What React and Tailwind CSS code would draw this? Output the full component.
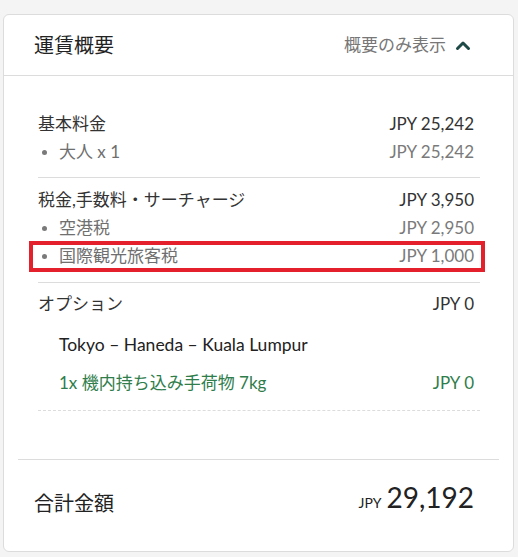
import React from "react";

const font = { fontFamily: 'Lato, "Noto Sans CJK JP", sans-serif' };

function Row({ label, value, sub, className = "" }) {
  return (
    <div className={`flex h-[28px] items-center justify-between pr-[6px] ${className}`}>
      {sub ? (
        <div className="flex items-center text-[#6f6f6f]">
          <span className="ml-[4px] mr-[12px] h-[5px] w-[5px] rounded-full bg-[#7a7a7a]" />
          <span>{label}</span>
        </div>
      ) : (
        <span className="text-[#333]">{label}</span>
      )}
      <span className={sub ? "text-[#7a7a7a]" : "text-[#333]"}>{value}</span>
    </div>
  );
}

export default function App() {
  return (
    <div className="min-h-[557px] w-[518px] bg-[#f4f4f4] pt-[14px] pl-[3px] pr-[4px]" style={font}>
      <div className="h-[538px] rounded-[6px] border border-[#dcdcdc] bg-white">
        <div className="flex h-[61px] items-center justify-between border-b border-[#dcdcdc] pl-[30px] pr-[42px]">
          <span className="text-[20px] text-[#222]">運賃概要</span>
          <div className="flex items-center gap-[9px] text-[17px] text-[#777]">
            <span>概要のみ表示</span>
            <svg width="16" height="11" viewBox="0 0 16 11">
              <path d="M2.5 8.5 L8 3 L13.5 8.5" fill="none" stroke="#1d4a46" strokeWidth="3" strokeLinecap="round" strokeLinejoin="round" />
            </svg>
          </div>
        </div>
        <div className="pl-[34px] pr-[33px] pt-[34px] text-[17px]">
          <Row label="基本料金" value="JPY 25,242" />
          <Row label="大人 x 1" value="JPY 25,242" sub />
          <div className="mt-[11px] border-t border-[#dcdcdc]" />
          <div className="pt-[8px]">
            <Row label="税金,手数料・サーチャージ" value="JPY 3,950" />
            <Row label="空港税" value="JPY 2,950" sub />
            <div className="relative">
              <Row label="国際観光旅客税" value="JPY 1,000" sub />
              <div className="pointer-events-none absolute -left-[9px] -right-[5px] -top-[1px] -bottom-[2px] border-[4px] border-[#e3202b]" />
            </div>
          </div>
          <div className="mt-[12px] border-t border-[#dcdcdc]" />
          <div className="pt-[7px]">
            <Row label="オプション" value="JPY 0" />
          </div>
          <div className="mt-[13px] flex h-[28px] items-center pl-[21px] text-[17.5px] text-[#222]">
            Tokyo – Haneda – Kuala Lumpur
          </div>
          <div className="mt-[10px] flex h-[28px] items-center justify-between pl-[21px] pr-[6px] text-[#2f7d4b]">
            <span>1x 機内持ち込み手荷物 7kg</span>
            <span>JPY 0</span>
          </div>
          <div className="mt-[13px] border-t border-dashed border-[#dcdcdc]" />
        </div>
        <div className="mx-[14px] mt-[48px] border-t border-[#dcdcdc]" />
        <div className="flex items-center justify-between pl-[30px] pr-[39px] pt-[16px]">
          <span className="mt-[12px] text-[20px] text-[#222]">合計金額</span>
          <div className="flex items-baseline gap-[5px] text-[#222]">
            <span className="text-[14px]">JPY</span>
            <span className="text-[28px]">29,192</span>
          </div>
        </div>
      </div>
    </div>
  );
}
